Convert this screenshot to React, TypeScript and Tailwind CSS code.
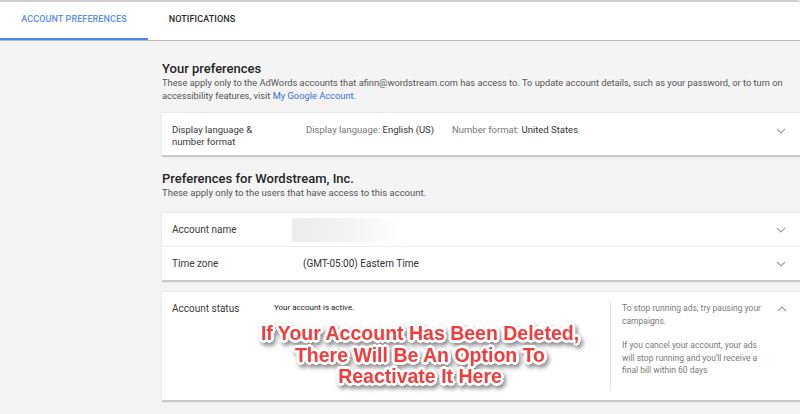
import React from "react";

function Chevron({ up = false }: { up?: boolean }) {
  return (
    <svg width="10" height="6" viewBox="0 0 10 6" className="shrink-0">
      <polyline
        points={up ? "1,5 5,1 9,5" : "1,1 5,5 9,1"}
        fill="none"
        stroke="#9e9e9e"
        strokeWidth="1.1"
      />
    </svg>
  );
}

const card = "bg-white border-b-2 border-[#c9c9c9] shadow-[0_0_2px_rgba(0,0,0,0.12)]";

export default function App() {
  return (
    <div className="relative h-[414px] w-[800px] overflow-hidden bg-[#f4f4f4] font-['Roboto','Liberation_Sans',sans-serif] text-[#3c3c3c]">
      {/* tabs */}
      <div className="flex h-[41px] border-t-2 border-[#cfcfcf] border-b border-b-[#b9b9b9] bg-white rounded-tr-[3px]">
        <div className="flex w-[148px] flex-col">
          <div className="flex flex-1 items-center justify-center text-[9px] font-medium tracking-[0.1px] text-[#5a8ef0]">
            ACCOUNT PREFERENCES
          </div>
          <div className="h-[2px] bg-[#4a86f0]" />
        </div>
        <div className="flex w-[108px] items-center justify-center pb-[2px] text-[9px] font-medium tracking-[0.1px] text-[#2a2a2a]">
          NOTIFICATIONS
        </div>
      </div>

      <div className="pl-[162px]">
        <div className="mt-[21px] text-[13px] font-medium leading-[14px] text-[#262626]">Your preferences</div>
        <p className="pr-[6px] text-[9.3px] leading-[13px] text-[#555]">
          These apply only to the AdWords accounts that afinn@wordstream.com has access to. To update account details, such as your password, or to turn on accessibility features, visit <span className="text-[#3b6fd4]">My Google Account</span>.
        </p>

        <div className={`${card} mt-[11px] flex h-[44px] items-start pl-[10px] pr-[14px] pt-[11px] text-[9.5px] leading-[12px]`}>
          <div className="w-[134px] text-[#3a3a3a]">
            Display language &amp;
            <br />
            number format
          </div>
          <div className="w-[146px]">
            <span className="text-[#777]">Display language:</span> <span className="text-[#333]">English (US)</span>
          </div>
          <div className="flex-1">
            <span className="text-[#777]">Number format:</span> <span className="text-[#333]">United States</span>
          </div>
          <div className="pt-[4px]">
            <Chevron />
          </div>
        </div>

        <div className="mt-[15px] text-[13px] font-medium leading-[14px] text-[#262626]">Preferences for Wordstream, Inc.</div>
        <div className="text-[9.5px] leading-[13px] text-[#555]">These apply only to the users that have access to this account.</div>

        <div className={`${card} mt-[14px]`}>
          <div className="flex h-[34px] items-center border-b border-[#ececec] pl-[10px] pr-[14px] text-[10px]">
            <div className="w-[120px] text-[#3a3a3a]">Account name</div>
            <div className="h-[24px] w-[110px] bg-gradient-to-r from-[#ececec] via-[#f3f3f3] to-white" />
            <div className="flex-1" />
            <Chevron />
          </div>
          <div className="flex h-[33px] items-center pl-[10px] pr-[14px] text-[10px]">
            <div className="w-[131px] text-[#3a3a3a]">Time zone</div>
            <div className="flex-1 text-[#333]">(GMT-05:00) Eastern Time</div>
            <Chevron />
          </div>
        </div>

        <div className={`${card} mt-[10px] flex h-[110px] pl-[10px] pr-[13px] pt-[10px]`}>
          <div className="w-[102px] text-[10px] leading-[13px] text-[#3a3a3a]">Account status</div>
          <div className="mb-[10px] w-[337px] border-r border-[#e3e3e3] text-[8px] leading-[11px] text-[#222]">
            Your account is active.
          </div>
          <div className="w-[152px] pl-[11px] text-[8.5px] leading-[12.5px] text-[#7a7a7a]">
            <p className="w-[141px]">To stop running ads, try pausing your campaigns.</p>
            <p className="mt-[12px] w-[136px]">If you cancel your account, your ads will stop running and you'll receive a final bill within 60 days</p>
          </div>
          <div className="flex-1" />
          <div className="pt-[4px]">
            <Chevron up />
          </div>
        </div>
      </div>

      {/* annotation over the screenshot */}
      <div className="absolute left-[200px] top-[323px] w-[440px] text-center font-['Liberation_Sans',Arial,sans-serif] text-[19.5px] font-bold leading-[21.5px] text-[#f23c3c] [filter:drop-shadow(2px_3px_2px_rgba(0,0,0,0.45))] [text-shadow:-2px_-2px_0_#fff,2px_-2px_0_#fff,-2px_2px_0_#fff,2px_2px_0_#fff,0_2px_0_#fff,0_-2px_0_#fff,2px_0_0_#fff,-2px_0_0_#fff,0_3px_0_#fff,3px_0_0_#fff,-3px_0_0_#fff,0_-3px_0_#fff]">
        If Your Account Has Been Deleted,
        <br />
        There Will Be An Option To
        <br />
        Reactivate It Here
      </div>
    </div>
  );
}
